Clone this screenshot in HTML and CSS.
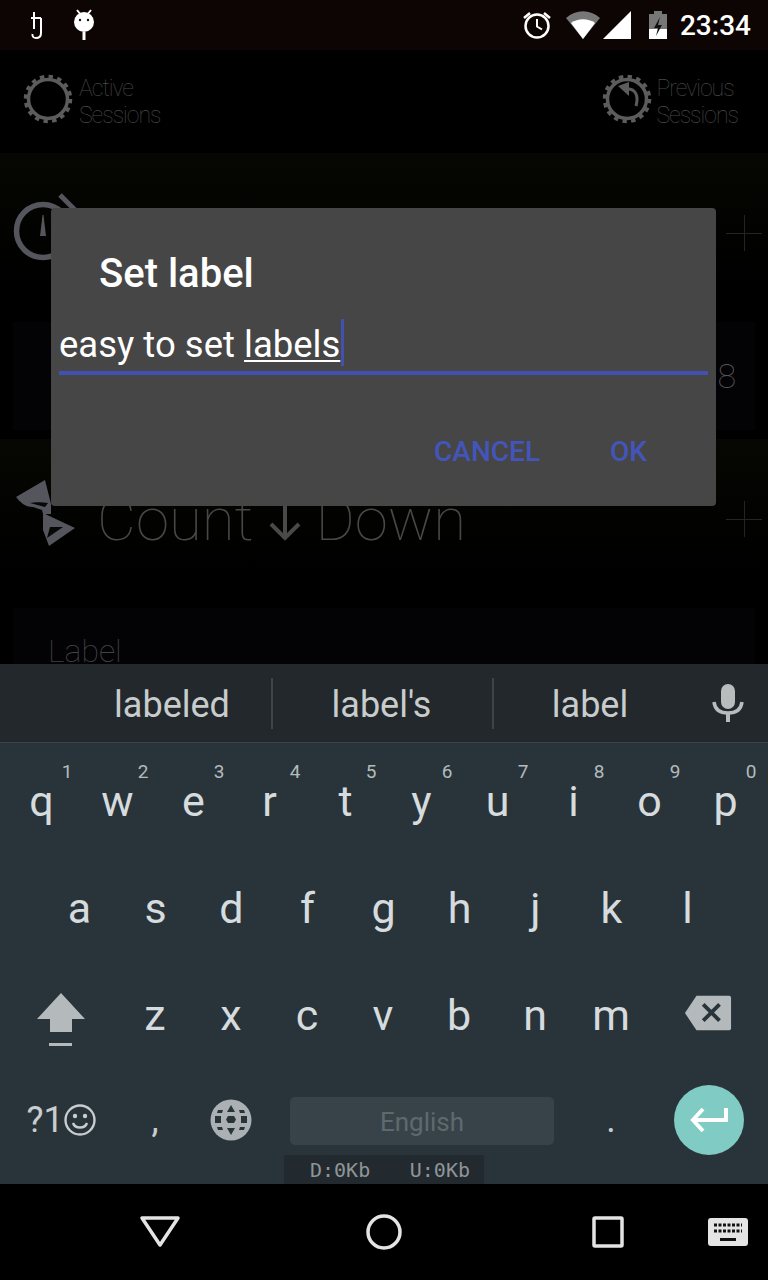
FILE: index.html
```html
<!DOCTYPE html>
<html lang="en">
<head>
    <meta charset="UTF-8">
    <title>Set label</title>
    <link rel="stylesheet" href="styles.css">
</head>
<body>
    <div class="phone">
        <div class="status-bar">
            <div class="status-left">
                <svg class="hook-icon" width="16" height="28" viewBox="0 0 16 28"><path d="M5 1v17M2 7h10M12 7v15c0 4-2 5-5 5-2 0-4-1-3.500-4" fill="none" stroke="#fff" stroke-width="2"/></svg>
                <svg class="pop-icon" width="24" height="32" viewBox="0 0 24 32"><path d="M5 1l4 5M19 1l-4 5" stroke="#fff" stroke-width="2"/><circle cx="12" cy="13" r="10" fill="#fff"/><circle cx="8" cy="11" r="1.200" fill="#111"/><circle cx="16" cy="11" r="1.200" fill="#111"/><rect x="10.500" y="23" width="3" height="8" fill="#fff"/></svg>
            </div>
            <div class="status-right">
                <svg width="30" height="30" viewBox="0 0 30 30"><circle cx="15" cy="16" r="11.500" fill="none" stroke="#fff" stroke-width="2.500"/><path d="M15 9v7.500l5 3" fill="none" stroke="#fff" stroke-width="2"/><path d="M2 8l6-5M28 8l-6-5" stroke="#fff" stroke-width="2.500"/></svg>
                <svg class="wifi" width="36" height="30" viewBox="0 0 36 30"><path d="M1 8C11-1 25-1 35 8L18 29z" fill="#777"/><path d="M6 13c7-5 17-5 24 0L18 29z" fill="#fff"/></svg>
                <svg class="signal" width="29" height="29" viewBox="0 0 29 29"><path d="M0 28L28 0v28z" fill="#fff"/></svg>
                <svg class="battery" width="20" height="30" viewBox="0 0 20 30"><path d="M6 1h8v3h5v25H1V4h5z" fill="#777"/><path d="M1 19h18v10H1z" fill="#fff"/><path d="M12 7l-6 11h4l-2 8 6-11h-4z" fill="#111"/></svg>
                <span class="clock">23:34</span>
            </div>
        </div>

        <div class="app">
            <div class="tabs">
                <div class="tab">
                    <svg width="50" height="50" viewBox="0 0 50 50"><circle cx="25" cy="25" r="19.500" fill="none" stroke="#5c5c5c" stroke-width="3.500"/><circle cx="25" cy="25" r="22.500" fill="none" stroke="#5c5c5c" stroke-width="3.500" stroke-dasharray="4.400 4.430"/></svg>
                    <span>Active<br>Sessions</span>
                </div>
                <div class="tab">
                    <svg width="50" height="50" viewBox="0 0 50 50"><circle cx="25" cy="25" r="19.500" fill="none" stroke="#5c5c5c" stroke-width="3.500"/><circle cx="25" cy="25" r="22.500" fill="none" stroke="#5c5c5c" stroke-width="3.500" stroke-dasharray="4.400 4.430"/><path d="M16 12l11-4v14z" fill="#5c5c5c"/><path d="M26 15c7 0 11 6 8 17" fill="none" stroke="#5c5c5c" stroke-width="3"/></svg>
                    <span>Previous<br>Sessions</span>
                </div>
            </div>

            <section class="timer-section">
                <div class="timer-head">
                    <svg class="timer-icon" width="64" height="70" viewBox="0 0 64 70"><circle cx="30" cy="33" r="26.500" fill="none" stroke="#55555e" stroke-width="5.500"/><path d="M29.500 17h1l2.500 21h-6z" fill="#55555e"/><path d="M47-3l15 15" stroke="#55555e" stroke-width="5"/></svg>
                    <h2>Count <svg class="arrow" width="34" height="44" viewBox="0 0 34 44"><path d="M17 43V3M3 17L17 3l14 14" fill="none" stroke="#4a4a4a" stroke-width="4"/></svg> Up</h2>
                    <span class="plus"></span>
                </div>
                <div class="timer-card"><span class="digit">8</span></div>
            </section>

            <section class="timer-section">
                <div class="timer-head">
                    <svg class="timer-icon" width="64" height="70" viewBox="0 0 64 70"><path d="M3 13L32-4l6 24v10h-8l-1-4-9-3C12 23 7 18 3 13z" fill="#55555e"/><path d="M30 29l32 15-26 18-6-16z" fill="#55555e"/><path d="M17 19c5-1 12-1 18 0l-3 4z" fill="#070707"/><path d="M37 43h13L34 54z" fill="#070707"/></svg>
                    <h2>Count <svg class="arrow" width="34" height="44" viewBox="0 0 34 44"><path d="M17 1v40M3 27l14 14 14-14" fill="none" stroke="#4a4a4a" stroke-width="4"/></svg> Down</h2>
                    <span class="plus"></span>
                </div>
                <div class="timer-card"><span class="card-label">Label</span></div>
            </section>

            <div class="dialog">
                <h3>Set label</h3>
                <div class="field"><span>easy to set <u>labels</u></span><i class="cursor"></i></div>
                <div class="dialog-actions">
                    <span>CANCEL</span>
                    <span>OK</span>
                </div>
            </div>
        </div>

        <div class="keyboard">
            <div class="suggestions">
                <span>labeled</span>
                <span>label's</span>
                <span>label</span>
                <svg class="mic" width="32" height="40" viewBox="0 0 32 40"><rect x="9" y="1" width="14" height="25" rx="7" fill="#b9bcbd"/><path d="M2 19c1 8 7 11 14 11s13-3 14-11" fill="none" stroke="#b9bcbd" stroke-width="3.500"/><path d="M16 30v9" stroke="#b9bcbd" stroke-width="4"/></svg>
            </div>
            <div class="keys">
                <div class="row row-top">
                    <span class="key">q<sup>1</sup></span>
                    <span class="key">w<sup>2</sup></span>
                    <span class="key">e<sup>3</sup></span>
                    <span class="key">r<sup>4</sup></span>
                    <span class="key">t<sup>5</sup></span>
                    <span class="key">y<sup>6</sup></span>
                    <span class="key">u<sup>7</sup></span>
                    <span class="key">i<sup>8</sup></span>
                    <span class="key">o<sup>9</sup></span>
                    <span class="key">p<sup>0</sup></span>
                </div>
                <div class="row row-home">
                    <span class="key">a</span>
                    <span class="key">s</span>
                    <span class="key">d</span>
                    <span class="key">f</span>
                    <span class="key">g</span>
                    <span class="key">h</span>
                    <span class="key">j</span>
                    <span class="key">k</span>
                    <span class="key">l</span>
                </div>
                <div class="row row-shift">
                    <span class="key side-left"><svg class="shift" width="50" height="54" viewBox="0 0 50 54"><path d="M25 1l24 26H36v13H14V27H1z" fill="#b4b9bb"/><rect x="13" y="51" width="23" height="3" fill="#b4b9bb"/></svg></span>
                    <span class="key">z</span>
                    <span class="key">x</span>
                    <span class="key">c</span>
                    <span class="key">v</span>
                    <span class="key">b</span>
                    <span class="key">n</span>
                    <span class="key">m</span>
                    <span class="key side-right"><svg class="backspace" width="48" height="38" viewBox="0 0 50 38"><path d="M13 1h34a2 2 0 0 1 2 2v32a2 2 0 0 1-2 2H13L1 19z" fill="#b4b9bb"/><path d="M20 10l17 17M37 10L20 27" stroke="#29343a" stroke-width="4"/></svg></span>
                </div>
                <div class="row row-bottom">
                    <span class="key side-left symbols">?1<svg width="32" height="32" viewBox="0 0 32 32"><circle cx="16" cy="16" r="14.500" fill="none" stroke="#c9cdcf" stroke-width="2.400"/><circle cx="11" cy="12" r="2.200" fill="#c9cdcf"/><circle cx="21" cy="12" r="2.200" fill="#c9cdcf"/><path d="M9 19c2 6 12 6 14 0" fill="none" stroke="#c9cdcf" stroke-width="2.400"/></svg></span>
                    <span class="key comma">,</span>
                    <span class="key"><svg width="42" height="42" viewBox="0 0 42 42"><circle cx="21" cy="21" r="20.500" fill="#aab0b3"/><path d="M21 6l4 7h-8zM5 17h6v7H5zM18 17h6l2 3.500-2 3.500h-6l-2-3.500zM31 17h6v7h-6zM17 29h8l-4 7zM8 11l5 0-1 3H7zM34 11h-5l1 3h5zM8 31h5l-1-3H7zM34 31h-5l1-3h5z" fill="#29343a"/></svg></span>
                    <span class="space">English</span>
                    <span class="key period">.</span>
                    <span class="key side-right"><span class="enter"><svg width="40" height="28" viewBox="0 0 40 28"><path d="M37 2v12H5M14 3L4 14l10 11" fill="none" stroke="#fff" stroke-width="4"/></svg></span></span>
                </div>
            </div>
            <div class="traffic"><span>D:0Kb</span><span>U:0Kb</span></div>
        </div>

        <div class="nav-bar">
            <svg width="42" height="34" viewBox="0 0 42 34"><path d="M3 3h36L21 30z" fill="none" stroke="#e4e4e4" stroke-width="3.500" stroke-linejoin="round"/></svg>
            <svg width="36" height="36" viewBox="0 0 36 36"><circle cx="18" cy="18" r="16" fill="none" stroke="#e4e4e4" stroke-width="3.500"/></svg>
            <svg width="32" height="32" viewBox="0 0 32 32"><rect x="2" y="2" width="28" height="28" rx="1" fill="none" stroke="#e4e4e4" stroke-width="3.500"/></svg>
            <svg class="nav-kbd" width="40" height="28" viewBox="0 0 40 28"><rect width="40" height="28" rx="3" fill="#e4e4e4"/><path d="M6 7h28M6 13h28" stroke="#111" stroke-width="3" stroke-dasharray="3 1.500"/><rect x="12" y="20" width="16" height="3" fill="#111"/></svg>
        </div>
    </div>
</body>
</html>
```

FILE: styles.css
```css
* {
    box-sizing: border-box;
}
body {
    margin: 0;
    background: #000;
    font-family: Roboto, "Liberation Sans", sans-serif;
}
.phone {
    width: 768px;
    height: 1280px;
    display: flex;
    flex-direction: column;
    overflow: hidden;
}
.status-bar {
    height: 50px;
    flex: none;
    display: flex;
    justify-content: space-between;
    align-items: center;
    background: #0d0404;
    color: #fff;
}
.status-left {
    display: flex;
    align-items: center;
    padding-left: 29px;
}
.pop-icon {
    margin-left: 27px;
}
.status-right {
    display: flex;
    align-items: center;
    padding-right: 17px;
}
.wifi {
    margin-left: 13px;
}
.signal {
    margin-left: 2px;
}
.battery {
    margin-left: 16px;
}
.clock {
    margin-left: 12px;
    font-size: 28px;
    font-weight: 500;
}

.app {
    position: relative;
    height: 614px;
    flex: none;
    overflow: hidden;
    background: #000;
}
.tabs {
    height: 103px;
    display: flex;
    justify-content: space-between;
    align-items: center;
    padding: 0 30px 0 23px;
}
.tab {
    display: flex;
    align-items: center;
    gap: 6px;
    font-size: 23px;
    font-weight: 100;
    line-height: 27px;
    letter-spacing: -1px;
    color: #4a4a4a;
}
.tab + .tab {
    gap: 4px;
}
.tab svg {
    margin-bottom: 6px;
}
.timer-section {
    height: 286px;
    padding-top: 45px;
    background: linear-gradient(#060602, #000 45%);
}
.timer-head {
    height: 70px;
    display: flex;
    align-items: center;
    padding: 0 6px 0 13px;
}
.timer-icon {
    flex: none;
    overflow: visible;
}
.timer-head h2 {
    flex: 1;
    margin: 0 0 0 20px;
    font-size: 60px;
    font-weight: 100;
    color: #484848;
    display: flex;
    align-items: center;
    gap: 14px;
    white-space: nowrap;
}
.plus {
    width: 36px;
    height: 36px;
    background: linear-gradient(#242424, #242424) center / 36px 1px no-repeat,
        linear-gradient(#242424, #242424) center / 1px 36px no-repeat;
}
.timer-card {
    height: 108px;
    margin: 54px 13px 0;
    padding: 0 19px 0 35px;
    display: flex;
    justify-content: flex-end;
    align-items: center;
    background: #030306;
}
.digit {
    font-size: 34px;
    font-weight: 100;
    color: #555;
}
.timer-card .card-label {
    margin-right: auto;
    align-self: flex-start;
    margin-top: 24px;
    font-size: 32px;
    font-weight: 100;
    color: #444;
}

.dialog {
    position: absolute;
    left: 51px;
    top: 158px;
    width: 665px;
    height: 298px;
    background: #464646;
    border-radius: 4px;
    display: flex;
    flex-direction: column;
}
.dialog h3 {
    margin: 42px 0 0 48px;
    font-size: 40px;
    line-height: 48px;
    font-weight: 500;
    color: #fff;
}
.field {
    margin: 13px 8px 0;
    height: 64px;
    padding-top: 8px;
    border-bottom: 4px solid #4251b0;
    display: flex;
    font-size: 36.5px;
    line-height: 52px;
    color: #fff;
    white-space: nowrap;
}
.field u {
    text-underline-offset: 3px;
    text-decoration-thickness: 2px;
}
.cursor {
    width: 3px;
    height: 47px;
    margin-left: 1px;
    background: #4251b0;
}
.dialog-actions {
    display: flex;
    justify-content: flex-end;
    gap: 70px;
    margin-top: 56px;
    padding-right: 69px;
    font-size: 28px;
    font-weight: 500;
    line-height: 42px;
    color: #4355bb;
}

.keyboard {
    position: relative;
    height: 520px;
    flex: none;
    background: #29343a;
}
.suggestions {
    position: relative;
    height: 79px;
    display: grid;
    grid-template-columns: 198px 221px 196px;
    padding-left: 73px;
    align-items: center;
    background: #22282b;
    border-bottom: 1px solid #3a454b;
    font-size: 36px;
    color: #c8cccd;
}
.suggestions span {
    text-align: center;
    line-height: 47px;
    padding: 4px 2px 0 0;
    border-left: 2px solid #3e4548;
}
.suggestions span:first-child {
    border-left: 0;
    padding-right: 0;
}
.mic {
    position: absolute;
    left: 712px;
    top: 19px;
}
.keys {
    padding-top: 4px;
}
.row {
    height: 107px;
    display: flex;
    justify-content: center;
    padding-right: 1px;
}
.row-bottom {
    height: 103px;
    justify-content: flex-start;
    padding-right: 0;
}
.row-shift {
    justify-content: flex-start;
    padding-right: 0;
}
.key {
    position: relative;
    width: 76px;
    flex: none;
    display: flex;
    justify-content: center;
    align-items: center;
    font-size: 43px;
    color: #d6dbdd;
}
.key sup {
    position: absolute;
    right: 7px;
    top: 14px;
    font-size: 19px;
    line-height: 22px;
    color: #b4babd;
}
.side-left {
    width: 117px;
    padding-left: 5px;
}
.side-right {
    width: 119px;
}
.shift {
    margin-top: 8px;
}
.backspace {
    margin: 0 2px 4px 0;
}
.symbols {
    font-size: 36px;
    color: #c9cdcf;
}
.comma,
.period {
    font-size: 36px;
    color: #c9cdcf;
}
.space {
    width: 264px;
    height: 48px;
    margin: 29px 19px 0 21px;
    flex: none;
    background: #384349;
    border-radius: 5px;
    text-align: center;
    font-size: 26px;
    line-height: 50px;
    color: #5e696e;
}
.enter {
    width: 70px;
    height: 70px;
    border-radius: 50%;
    background: #80cbc4;
    display: flex;
    justify-content: center;
    align-items: center;
}
.traffic {
    position: absolute;
    left: 284px;
    bottom: 0;
    width: 200px;
    height: 29px;
    display: flex;
    justify-content: space-between;
    padding: 2px 14px 0 26px;
    background: #222a2f;
    font-family: "DejaVu Sans Mono", monospace;
    font-size: 20px;
    line-height: 27px;
    color: #8e9598;
}

.nav-bar {
    position: relative;
    height: 96px;
    flex: none;
    background: #000;
    display: grid;
    grid-template-columns: repeat(3, 224px);
    justify-items: center;
    align-items: center;
    padding-left: 48px;
}
.nav-kbd {
    position: absolute;
    left: 708px;
    top: 34px;
}
```
